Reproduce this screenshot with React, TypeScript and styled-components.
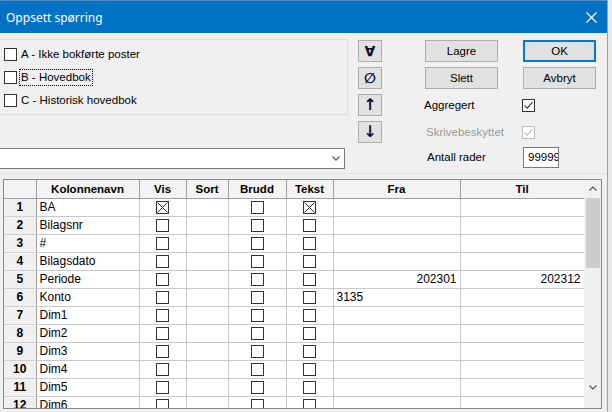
import styled, { createGlobalStyle } from 'styled-components';

const GlobalStyle = createGlobalStyle`
  html, body {
    margin: 0;
    padding: 0;
    background: #e8e8e8;
  }
  * {
    box-sizing: border-box;
  }
`;

const UI_FONT = `'Liberation Sans', Arial, sans-serif`;

const Shell = styled.div`
  width: 612px;
  height: 412px;
  display: flex;
  overflow: hidden;
  background: #e8e8e8;
`;

const Window = styled.div`
  width: 608px;
  height: 412px;
  display: flex;
  flex-direction: column;
  background: #f0f0f0;
  border-right: 1px solid #a0a0a0;
`;

const TitleBar = styled.div`
  height: 33px;
  flex: none;
  display: flex;
  align-items: center;
  justify-content: space-between;
  padding: 0 10px 0 6px;
  background: #0072c6;
  border-top: 1px solid #5f8fc0;
  color: #fff;
  font-family: 'Noto Sans', 'Open Sans', sans-serif;
  font-size: 12px;
`;

const CloseIcon = () => (
  <svg width="11" height="11" viewBox="0 0 11 11">
    <path d="M0.5 0.5 L10.5 10.5 M10.5 0.5 L0.5 10.5" stroke="#fff" strokeWidth="1.1" />
  </svg>
);

const Body = styled.div`
  flex: 1;
  display: flex;
  flex-direction: column;
  font-family: ${UI_FONT};
  font-size: 11px;
  color: #000;
`;

const TopSection = styled.div`
  height: 140px;
  flex: none;
  display: flex;
`;

const LeftColumn = styled.div`
  width: 348px;
  display: flex;
  flex-direction: column;
`;

const GroupBox = styled.div`
  margin: 6px 0 0 -3px;
  width: 351px;
  height: 76px;
  border: 1px solid #dcdcdc;
  display: flex;
  flex-direction: column;
  gap: 10px;
  padding: 8px 0 0 6px;
`;

const CheckRow = styled.div`
  display: flex;
  align-items: center;
  gap: 3px;
  height: 13px;
`;

const CheckText = styled.span<{ $focused?: boolean }>`
  padding: 1px 1px;
  outline: ${(p) => (p.$focused ? '1px dotted #000' : 'none')};
  outline-offset: 0;
  line-height: 13px;
  font-size: 11.5px;
`;

const Combo = styled.div`
  margin: 33px 0 0 -3px;
  width: 348px;
  height: 21px;
  background: #fff;
  border: 1px solid #7a7a7a;
  display: flex;
  align-items: center;
  justify-content: flex-end;
  padding-right: 4px;
`;

const ArrowColumn = styled.div`
  margin: 7px 0 0 10px;
  width: 24px;
  display: flex;
  flex-direction: column;
  gap: 5px;
`;

const ToolButton = styled.button<{ $size?: number }>`
  width: 24px;
  height: 22px;
  padding: 0;
  border: 1px solid #adadad;
  background: #e1e1e1;
  color: #101030;
  font-family: 'DejaVu Sans', sans-serif;
  font-size: ${(p) => p.$size ?? 15}px;
  font-weight: bold;
  line-height: 20px;
  display: flex;
  align-items: center;
  justify-content: center;
`;

const RightPanel = styled.div`
  margin: 7px 0 0 42px;
  display: flex;
  flex-direction: column;
`;

const ButtonRow = styled.div<{ $top?: number }>`
  display: flex;
  gap: 25px;
  padding-left: 1px;
  margin-top: ${(p) => p.$top ?? 0}px;
`;

const PushButton = styled.button<{ $default?: boolean }>`
  width: 73px;
  height: 22px;
  padding: 0;
  background: #e1e1e1;
  border: ${(p) => (p.$default ? '2px solid #0078d7' : '1px solid #adadad')};
  font-family: ${UI_FONT};
  font-size: 11.5px;
  color: #000;
`;

const OptionRow = styled.div<{ $top: number; $height: number }>`
  display: flex;
  align-items: center;
  margin-top: ${(p) => p.$top}px;
  height: ${(p) => p.$height}px;
`;

const OptionLabel = styled.span<{ $indent?: number; $muted?: boolean }>`
  width: 98px;
  padding-left: ${(p) => p.$indent ?? 0}px;
  color: ${(p) => (p.$muted ? '#9a9a9a' : '#000')};
  font-size: 11.5px;
`;

const NumberInput = styled.input`
  width: 36px;
  height: 21px;
  margin-left: 1px;
  border: 1px solid #7a7a7a;
  background: #fff;
  padding: 0 0 0 4px;
  font-family: ${UI_FONT};
  font-size: 11.5px;
  color: #000;
  outline: none;
`;

const Box = styled.span<{ $disabled?: boolean }>`
  width: 13px;
  height: 13px;
  flex: none;
  display: inline-flex;
  align-items: center;
  justify-content: center;
  background: #fff;
  border: 1px solid ${(p) => (p.$disabled ? '#bcbcbc' : '#333')};
`;

type Mark = 'none' | 'tick' | 'cross';

const CheckBox = ({ mark = 'none', disabled }: { mark?: Mark; disabled?: boolean }) => {
  const color = disabled ? '#bcbcbc' : '#333';
  return (
    <Box $disabled={disabled}>
      {mark === 'tick' && (
        <svg width="11" height="11" viewBox="0 0 11 11">
          <path d="M1.5 5.5 L4.2 8.2 L9.5 2.2" stroke={color} strokeWidth="1.1" fill="none" />
        </svg>
      )}
      {mark === 'cross' && (
        <svg width="11" height="11" viewBox="0 0 11 11">
          <path d="M0.5 0.5 L10.5 10.5 M10.5 0.5 L0.5 10.5" stroke={color} strokeWidth="1" />
        </svg>
      )}
    </Box>
  );
};

const GridPanel = styled.div`
  flex: 1;
  border-top: 1px solid #e0e0e0;
  padding: 5px 0 0 3px;
`;

const GridFrame = styled.div`
  width: 599px;
  height: 230px;
  border: 1px solid #828790;
  display: flex;
  background: #fff;
`;

const Viewport = styled.div`
  width: 580px;
  overflow: hidden;
`;

const Table = styled.table`
  border-collapse: collapse;
  table-layout: fixed;
  width: 580px;
  font-family: ${UI_FONT};
  font-size: 12px;
  color: #000;
`;

const HeadRow = styled.tr`
  height: 18px;
`;

const BodyRow = styled.tr`
  height: 18px;
`;

const HeadCell = styled.th`
  padding: 0;
  background: #f3f3f3;
  border-right: 1px solid #a0a0a0;
  border-bottom: 1px solid #a0a0a0;
  font-size: 11.5px;
  font-weight: bold;
  text-align: center;
  line-height: 14px;
`;

const NumCell = styled.td`
  padding: 0;
  background: #f0f0f0;
  border-right: 1px solid #a0a0a0;
  border-bottom: 1px solid #d0d0d0;
  font-weight: bold;
  text-align: center;
  line-height: 14px;
`;

const Cell = styled.td<{ $align?: 'left' | 'center' | 'right' }>`
  padding: 0 3px;
  border-right: 1px solid #c8c8c8;
  border-bottom: 1px solid #c8c8c8;
  text-align: ${(p) => p.$align ?? 'left'};
  white-space: nowrap;
  overflow: hidden;
  line-height: 14px;
`;

const BoxCell = styled(Cell)`
  text-align: center;
  line-height: 0;
  > span {
    display: inline-flex;
    vertical-align: middle;
  }
`;

const ScrollBar = styled.div`
  width: 17px;
  background: #f0f0f0;
  display: flex;
  flex-direction: column;
`;

const ScrollArrow = styled.div`
  height: 17px;
  display: flex;
  align-items: center;
  justify-content: center;
`;

const Thumb = styled.div`
  height: 70px;
  margin: 1px 1px 0 2px;
  background: #cdcdcd;
`;

const ScrollTrack = styled.div`
  flex: 1;
`;

const ScrollFoot = styled.div`
  height: 12px;
`;

const Chevron = ({ up }: { up?: boolean }) => (
  <svg width="8" height="5" viewBox="0 0 8 5">
    <path d={up ? 'M0.5 4.5 L4 1 L7.5 4.5' : 'M0.5 0.5 L4 4 L7.5 0.5'} stroke="#606060" strokeWidth="1.4" fill="none" />
  </svg>
);

const COLS = [32, 103, 47, 42, 58, 47, 127, 124];

const ROWS: { name: string; vis?: boolean; tekst?: boolean; fra?: string; til?: string; fraLeft?: boolean }[] = [
  { name: 'BA', vis: true, tekst: true },
  { name: 'Bilagsnr' },
  { name: '#' },
  { name: 'Bilagsdato' },
  { name: 'Periode', fra: '202301', til: '202312' },
  { name: 'Konto', fra: '3135', fraLeft: true },
  { name: 'Dim1' },
  { name: 'Dim2' },
  { name: 'Dim3' },
  { name: 'Dim4' },
  { name: 'Dim5' },
  { name: 'Dim6' },
];

export default function App() {
  return (
    <Shell>
      <GlobalStyle />
      <Window>
        <TitleBar>
          <span>Oppsett spørring</span>
          <CloseIcon />
        </TitleBar>
        <Body>
          <TopSection>
            <LeftColumn>
              <GroupBox>
                <CheckRow>
                  <CheckBox />
                  <CheckText>A - Ikke bokførte poster</CheckText>
                </CheckRow>
                <CheckRow>
                  <CheckBox />
                  <CheckText $focused>B - Hovedbok</CheckText>
                </CheckRow>
                <CheckRow>
                  <CheckBox />
                  <CheckText>C - Historisk hovedbok</CheckText>
                </CheckRow>
              </GroupBox>
              <Combo>
                <Chevron />
              </Combo>
            </LeftColumn>
            <ArrowColumn>
              <ToolButton $size={14}>∀</ToolButton>
              <ToolButton $size={14}>∅</ToolButton>
              <ToolButton $size={16}>↑</ToolButton>
              <ToolButton $size={16}>↓</ToolButton>
            </ArrowColumn>
            <RightPanel>
              <ButtonRow>
                <PushButton>Lagre</PushButton>
                <PushButton $default>OK</PushButton>
              </ButtonRow>
              <ButtonRow $top={5}>
                <PushButton>Slett</PushButton>
                <PushButton>Avbryt</PushButton>
              </ButtonRow>
              <OptionRow $top={3} $height={26}>
                <OptionLabel>Aggregert</OptionLabel>
                <CheckBox mark="tick" />
              </OptionRow>
              <OptionRow $top={1} $height={26}>
                <OptionLabel $indent={2} $muted>
                  Skrivebeskyttet
                </OptionLabel>
                <CheckBox mark="tick" disabled />
              </OptionRow>
              <OptionRow $top={1} $height={22}>
                <OptionLabel $indent={3}>Antall rader</OptionLabel>
                <NumberInput readOnly value="99999" />
              </OptionRow>
            </RightPanel>
          </TopSection>
          <GridPanel>
            <GridFrame>
              <Viewport>
                <Table>
                  <colgroup>
                    {COLS.map((w, i) => (
                      <col key={i} style={{ width: w }} />
                    ))}
                  </colgroup>
                  <thead>
                    <HeadRow>
                      <HeadCell />
                      <HeadCell>Kolonnenavn</HeadCell>
                      <HeadCell>Vis</HeadCell>
                      <HeadCell>Sort</HeadCell>
                      <HeadCell>Brudd</HeadCell>
                      <HeadCell>Tekst</HeadCell>
                      <HeadCell>Fra</HeadCell>
                      <HeadCell>Til</HeadCell>
                    </HeadRow>
                  </thead>
                  <tbody>
                    {ROWS.map((r, i) => (
                      <BodyRow key={r.name}>
                        <NumCell>{i + 1}</NumCell>
                        <Cell>{r.name}</Cell>
                        <BoxCell>
                          <CheckBox mark={r.vis ? 'cross' : 'none'} />
                        </BoxCell>
                        <Cell />
                        <BoxCell>
                          <CheckBox />
                        </BoxCell>
                        <BoxCell>
                          <CheckBox mark={r.tekst ? 'cross' : 'none'} />
                        </BoxCell>
                        <Cell $align={r.fraLeft ? 'left' : 'right'}>{r.fra}</Cell>
                        <Cell $align="right">{r.til}</Cell>
                      </BodyRow>
                    ))}
                  </tbody>
                </Table>
              </Viewport>
              <ScrollBar>
                <ScrollArrow>
                  <Chevron up />
                </ScrollArrow>
                <Thumb />
                <ScrollTrack />
                <ScrollArrow>
                  <Chevron />
                </ScrollArrow>
                <ScrollFoot />
              </ScrollBar>
            </GridFrame>
          </GridPanel>
        </Body>
      </Window>
    </Shell>
  );
}
